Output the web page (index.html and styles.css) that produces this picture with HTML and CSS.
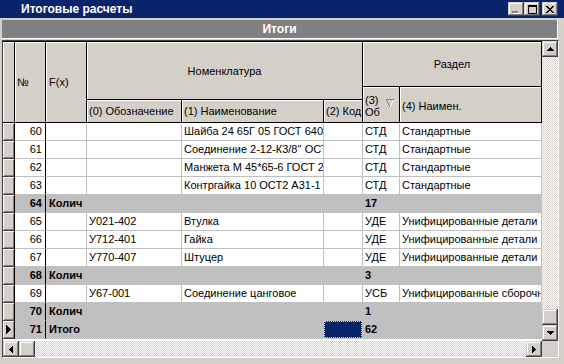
FILE: index.html
```html
<!DOCTYPE html>
<html lang="ru">
<head>
<meta charset="utf-8">
<title>Итоговые расчеты</title>
<link rel="stylesheet" href="styles.css">
</head>
<body>
<div class="window">
  <div class="titlebar">
    <span class="title">Итоговые расчеты</span>
    <div class="tb-buttons">
      <div class="btn tb-btn"><svg width="8" height="3" viewBox="0 0 8 3" shape-rendering="crispEdges"><rect x="0" y="0" width="6" height="2" fill="#808080"/><rect x="1" y="2" width="6" height="1" fill="#fff"/><rect x="6" y="1" width="1" height="1" fill="#fff"/></svg></div>
      <div class="btn tb-btn"><svg width="9" height="9" viewBox="0 0 9 9" shape-rendering="crispEdges"><path d="M0 0h9v9H0z M1 2v6h7V2z" fill="#000" fill-rule="evenodd"/></svg></div>
      <div class="btn tb-btn close"><svg width="8" height="7" viewBox="0 0 8 7" shape-rendering="crispEdges" fill="#000"><rect x="0" y="0" width="2" height="1"/><rect x="6" y="0" width="2" height="1"/><rect x="1" y="1" width="2" height="1"/><rect x="5" y="1" width="2" height="1"/><rect x="2" y="2" width="4" height="1"/><rect x="3" y="3" width="2" height="1"/><rect x="2" y="4" width="4" height="1"/><rect x="1" y="5" width="2" height="1"/><rect x="5" y="5" width="2" height="1"/><rect x="0" y="6" width="2" height="1"/><rect x="6" y="6" width="2" height="1"/></svg></div>
    </div>
  </div>
  <div class="caption">Итоги</div>
  <div class="frame">
    <div class="body-row">
      <div class="grid">
        <div class="header">
          <div class="h h-ind"></div>
          <div class="h h-num">№</div>
          <div class="h h-fx">F(x)</div>
          <div class="h h-nom">Номенклатура</div>
          <div class="h h-c0">(0) Обозначение</div>
          <div class="h h-c1">(1) Наименование</div>
          <div class="h h-c2">(2) Код</div>
          <div class="h h-razd">Раздел</div>
          <div class="h h-c3"><span class="two">(3)<br>Об</span><svg class="sort" width="8" height="8" viewBox="0 0 8 8" shape-rendering="crispEdges"><path d="M0 0h8v1H0z M0 1h1v1H0z M1 2h1v2H1z M2 4h1v2H2z M3 6h1v2H3z" fill="#808080"/><path d="M7 1h1v1H7z M6 2h1v2H6z M5 4h1v2H5z M4 6h1v2H4z" fill="#fff"/></svg></div>
          <div class="h h-c4">(4) Наимен.</div>
        </div>
        <div class="rows">
          <div class="row"><div class="ind"></div><div class="c num">60</div><div class="c"></div><div class="c"></div><div class="c">Шайба 24 65Г 05 ГОСТ 6402-70</div><div class="c"></div><div class="c">СТД</div><div class="c">Стандартные</div></div>
          <div class="row"><div class="ind"></div><div class="c num">61</div><div class="c"></div><div class="c"></div><div class="c">Соединение 2-12-К3/8'' ОСТ 1</div><div class="c"></div><div class="c">СТД</div><div class="c">Стандартные</div></div>
          <div class="row"><div class="ind"></div><div class="c num">62</div><div class="c"></div><div class="c"></div><div class="c">Манжета М 45*65-6 ГОСТ 2</div><div class="c"></div><div class="c">СТД</div><div class="c">Стандартные</div></div>
          <div class="row"><div class="ind"></div><div class="c num">63</div><div class="c"></div><div class="c"></div><div class="c">Контргайка 10 ОСТ2 А31-1</div><div class="c"></div><div class="c">СТД</div><div class="c">Стандартные</div></div>
          <div class="row total"><div class="ind"></div><div class="c num">64</div><div class="c lbl">Колич</div><div class="c">17</div><div class="c"></div></div>
          <div class="row"><div class="ind"></div><div class="c num">65</div><div class="c"></div><div class="c">У021-402</div><div class="c">Втулка</div><div class="c"></div><div class="c">УДЕ</div><div class="c">Унифицированные детали</div></div>
          <div class="row"><div class="ind"></div><div class="c num">66</div><div class="c"></div><div class="c">У712-401</div><div class="c">Гайка</div><div class="c"></div><div class="c">УДЕ</div><div class="c">Унифицированные детали</div></div>
          <div class="row"><div class="ind"></div><div class="c num">67</div><div class="c"></div><div class="c">У770-407</div><div class="c">Штуцер</div><div class="c"></div><div class="c">УДЕ</div><div class="c">Унифицированные детали</div></div>
          <div class="row total"><div class="ind"></div><div class="c num">68</div><div class="c lbl">Колич</div><div class="c">3</div><div class="c"></div></div>
          <div class="row"><div class="ind"></div><div class="c num">69</div><div class="c"></div><div class="c">У67-001</div><div class="c">Соединение цанговое</div><div class="c"></div><div class="c">УСБ</div><div class="c">Унифицированные сборочные</div></div>
          <div class="row total"><div class="ind"></div><div class="c num">70</div><div class="c lbl">Колич</div><div class="c">1</div><div class="c"></div></div>
          <div class="row total"><div class="ind current"><svg width="5" height="9" viewBox="0 0 5 9" shape-rendering="crispEdges"><path d="M0 0h1v1h1v1h1v1h1v1h1v1H4v1H3v1H2v1H1v1H0z" fill="#000"/></svg></div><div class="c num">71</div><div class="c lbl2">Итого</div><div class="c sel"><div class="focus"></div></div><div class="c">62</div><div class="c"></div></div>
        </div>
      </div>
      <div class="vscroll">
        <div class="btn sb-btn"><svg width="7" height="4" viewBox="0 0 7 4" shape-rendering="crispEdges"><path d="M3 0h1v1h1v1h1v1h1v1H0V3h1V2h1V1h1z" fill="#000"/></svg></div>
        <div class="track v-track"></div>
        <div class="btn sb-thumb"></div>
        <div class="btn sb-btn"><svg width="7" height="4" viewBox="0 0 7 4" shape-rendering="crispEdges"><path d="M0 0h7v1H6v1H5v1H4v1H3V3H2V2H1V1H0z" fill="#000"/></svg></div>
      </div>
    </div>
    <div class="hscroll-row">
      <div class="hscroll">
        <div class="btn sb-btn"><svg width="4" height="7" viewBox="0 0 4 7" shape-rendering="crispEdges"><path d="M3 0h1v7H3V6H2V5H1V4H0V3h1V2h1V1h1z" fill="#000"/></svg></div>
        <div class="btn sb-thumb"></div>
        <div class="track h-track"></div>
        <div class="btn sb-btn"><svg width="4" height="7" viewBox="0 0 4 7" shape-rendering="crispEdges"><path d="M0 0h1v1h1v1h1v1h1v1H3v1H2v1H1v1H0z" fill="#000"/></svg></div>
      </div>
      <div class="corner"></div>
    </div>
  </div>
</div>
</body>
</html>
```

FILE: styles.css
```css
* { box-sizing: border-box; }

body {
  margin: 0;
  background: #d4d0c8;
  font-family: "Liberation Sans", Arial, sans-serif;
  font-size: 11px;
  color: #000;
}

.window {
  width: 564px;
  height: 364px;
  overflow: hidden;
  background: #d4d0c8;
}

.titlebar {
  height: 18px;
  background: #0a246a;
  display: flex;
  align-items: center;
  padding-left: 21px;
  padding-right: 6px;
}

.title {
  flex: 1;
  color: #fff;
  font-weight: bold;
  font-size: 12px;
  line-height: 18px;
}

.tb-buttons {
  display: flex;
  align-self: flex-start;
  padding-top: 2px;
}

.btn {
  background: #d4d0c8;
  box-shadow: inset -1px -1px #404040, inset 1px 1px #d4d0c8, inset -2px -2px #808080, inset 2px 2px #fff;
  display: flex;
  align-items: center;
  justify-content: center;
}

.tb-btn {
  width: 16px;
  height: 14px;
}

.tb-btn svg { display: block; }
.tb-btn:first-child svg { margin-top: 6px; margin-left: -1px; }
.tb-btn.close { margin-left: 2px; }

.caption {
  margin: 2px 6px 0 2px;
  height: 19px;
  background: #808080;
  border-right: 1px solid #fff;
  border-bottom: 1px solid #fff;
  color: #fff;
  font-weight: bold;
  font-size: 12px;
  line-height: 18px;
  text-align: center;
}

.frame {
  margin: 1px 0 0 2px;
  width: 557px;
  border-top: 1px solid #404040;
  border-left: 1px solid #404040;
  border-right: 1px solid #fff;
  border-bottom: 1px solid #fff;
}

.body-row {
  display: flex;
  height: 300px;
}

.grid {
  width: 539px;
  background: #fff;
  overflow: hidden;
}

.header {
  display: grid;
  grid-template-columns: 12px 31px 41px 95px 142px 39px 37px 142px;
  grid-template-rows: 45px 13px 23px;
  border-top: 1px solid #000;
  background: #d4d0c8;
}

.h {
  background: #d4d0c8;
  border-right: 1px solid #000;
  border-bottom: 1px solid #000;
  box-shadow: inset 1px 1px #fff;
  display: flex;
  align-items: center;
  padding-left: 2px;
  white-space: nowrap;
  overflow: hidden;
}

.h-ind { grid-column: 1; grid-row: 1 / 4; }
.h-num { grid-column: 2; grid-row: 1 / 4; }
.h-fx { grid-column: 3; grid-row: 1 / 4; padding-left: 3px; }
.h-nom { grid-column: 4 / 7; grid-row: 1 / 3; justify-content: center; padding-left: 0; }
.h-c0 { grid-column: 4; grid-row: 3; }
.h-c1 { grid-column: 5; grid-row: 3; }
.h-c2 { grid-column: 6; grid-row: 3; }
.h-razd { grid-column: 7 / 9; grid-row: 1; justify-content: center; padding-left: 0; }
.h-c3 { grid-column: 7; grid-row: 2 / 4; align-items: center; }
.h-c4 { grid-column: 8; grid-row: 2 / 4; padding-top: 3px; }

.two { line-height: 12px; padding-top: 2px; }
.sort { margin-left: 6px; margin-top: -4px; display: block; }

.row {
  display: grid;
  grid-template-columns: 12px 31px 41px 95px 142px 39px 37px 142px;
  height: 18px;
}

.ind {
  background: #d4d0c8;
  border-right: 1px solid #000;
  border-bottom: 1px solid #404040;
  box-shadow: inset 1px 1px #fff, inset -1px -1px #808080;
  display: flex;
  align-items: center;
  justify-content: center;
}

.c {
  background: #fff;
  border-right: 1px solid #c0c0c0;
  border-bottom: 1px solid #c0c0c0;
  padding: 0 2px;
  line-height: 17px;
  white-space: nowrap;
  overflow: hidden;
}

.num {
  text-align: right;
  padding-right: 3px;
  border-right-color: #000;
}

.total .c {
  background: #c0c0c0;
  border-right-color: #c0c0c0;
  border-bottom-color: #c0c0c0;
  font-weight: bold;
}

.total .num { border-right-color: #000; }

.lbl { grid-column: 3 / 7; padding-left: 3px; }
.lbl2 { grid-column: 3 / 6; padding-left: 3px; }

.total .sel {
  padding: 0;
  border-right: 1px solid #c0c0c0;
  border-bottom: 1px solid #c0c0c0;
}

.focus {
  width: 100%;
  height: 100%;
  background: #0a246a;
  outline: 1px dotted #e8d890;
  outline-offset: -1px;
  border: 1px dotted #000;
}

.vscroll {
  width: 16px;
  display: flex;
  flex-direction: column;
}

.sb-btn { width: 16px; height: 16px; flex: none; }
.sb-thumb { width: 16px; height: 16px; flex: none; }

.track {
  background: repeating-conic-gradient(#d4d0c8 0 25%, #fff 0 50%) 0 0 / 2px 2px;
}

.v-track { flex: 1; }

.hscroll-row {
  display: flex;
  height: 16px;
}

.hscroll {
  width: 539px;
  display: flex;
}

.h-track { flex: 1; }

.corner {
  width: 16px;
  background: #d4d0c8;
}
```
